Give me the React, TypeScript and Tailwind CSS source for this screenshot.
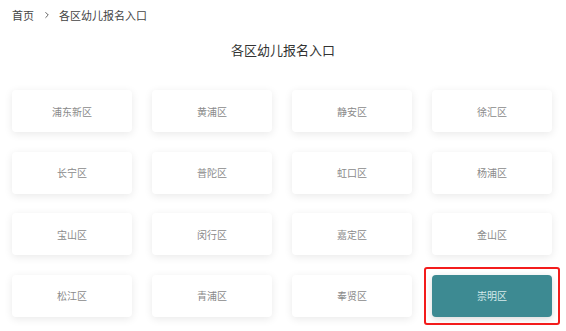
import React from 'react';
import { ChevronRight } from 'lucide-react';

const DISTRICTS = [
  '浦东新区', '黄浦区', '静安区', '徐汇区',
  '长宁区', '普陀区', '虹口区', '杨浦区',
  '宝山区', '闵行区', '嘉定区', '金山区',
  '松江区', '青浦区', '奉贤区', '崇明区',
];

const ACTIVE = '崇明区';

export default function App() {
  return (
    <div
      className="w-[566px] h-[331px] bg-white overflow-hidden px-[12px]"
      style={{ fontFamily: '"Noto Sans CJK SC", "Noto Sans", sans-serif' }}
    >
      {/* Breadcrumb */}
      <div className="pt-[7px] flex items-center text-[11px] leading-[16px] text-[#444]">
        <span>首页</span>
        <ChevronRight size={10} strokeWidth={2.2} className="ml-[8px] mr-[7px] text-[#555]" />
        <span>各区幼儿报名入口</span>
      </div>

      {/* Title */}
      <div className="mt-[17px] text-center text-[13px] leading-[20px] text-[#333]">
        各区幼儿报名入口
      </div>

      {/* District grid */}
      <div className="mt-[30px] grid grid-cols-[repeat(4,120px)] gap-x-[20px] gap-y-[19.5px]">
        {DISTRICTS.map(d => {
          const active = d === ACTIVE;
          return (
            <div
              key={d}
              className={
                active
                  ? 'relative h-[42px] rounded-[4px] flex items-center justify-center text-[10px] text-[#d6ebec] bg-[#3d8a92] shadow-[0_2px_6px_rgba(0,0,0,0.15)]'
                  : 'h-[42px] rounded-[4px] flex items-center justify-center text-[10px] text-[#8a8a8a] bg-white shadow-[0_2px_8px_rgba(0,0,0,0.09)]'
              }
            >
              {d}
              {active && (
                <span className="absolute -inset-[8px] border-2 border-[#f31c1c] rounded-[3px] pointer-events-none" />
              )}
            </div>
          );
        })}
      </div>
    </div>
  );
}
